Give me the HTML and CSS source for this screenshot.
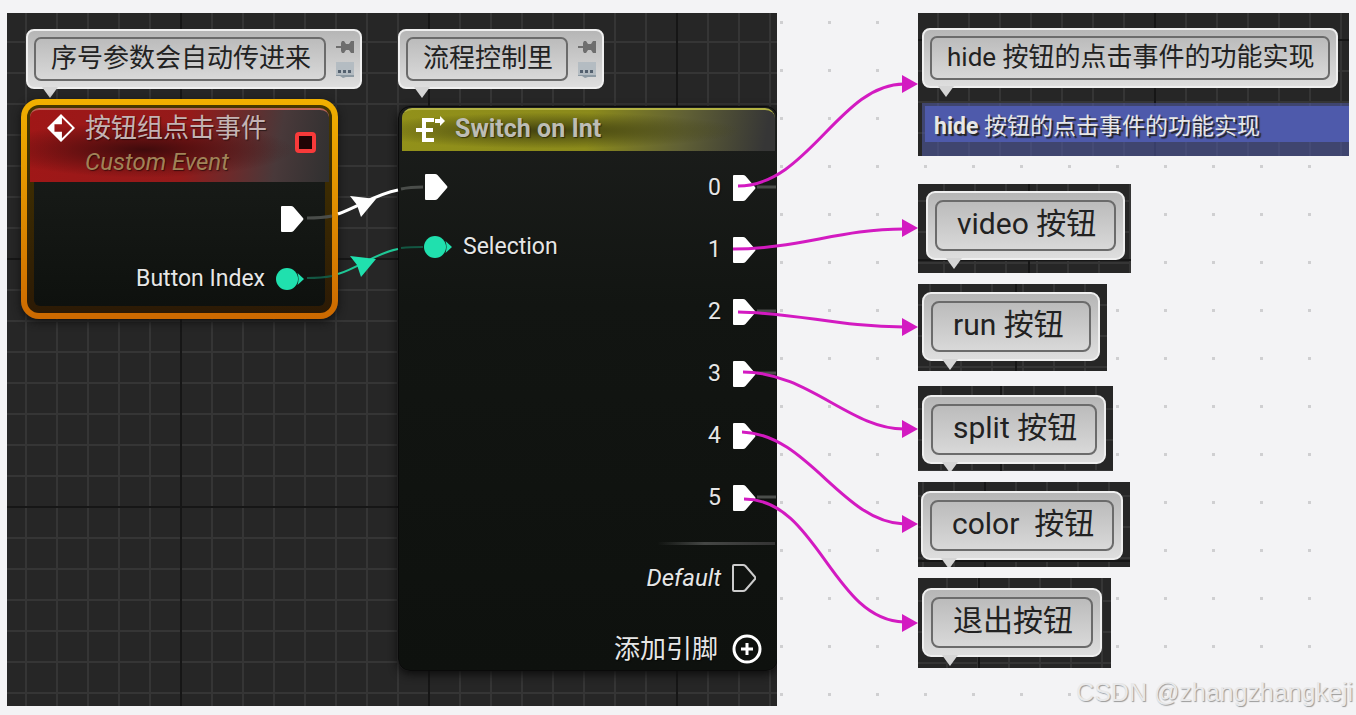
FILE: index.html
```
<!DOCTYPE html>
<html lang="zh-CN">
<head>
    <meta charset="UTF-8">
    <meta name="viewport" content="width=device-width, initial-scale=1.0">
    <title>按钮组点击事件</title>
    <link rel="stylesheet" href="styles.css">
</head>
<body>
    <!-- shared icons -->
    <svg class="symbols" aria-hidden="true">
        <symbol id="exec" viewBox="0 0 24 28">
            <path d="M1 2Q1 1 2 1H11Q12.500 1 13.500 2L23 13Q24 14 23 15L13.500 26Q12.500 27 11 27H2Q1 27 1 26Z"/>
        </symbol>
        <symbol id="data" viewBox="0 0 28 22">
            <circle cx="11" cy="11" r="11"/>
            <path d="M21.500 5L28 11L21.500 17Q23.500 11 21.500 5Z"/>
        </symbol>
        <symbol id="pushpin" viewBox="0 0 18 14">
            <path d="M0 6H5V3L6 1H8L10 4H13L15 1H18V13H15L13 10H10L8 13H6L5 11V8H0Z"/>
        </symbol>
        <symbol id="bubble" viewBox="0 0 18 16">
            <path d="M0 0H18V14H0Z" fill="#b4bcc2"/>
            <path d="M0 13H18V15H10L7 16L4 14H0Z" fill="#8d9aa3"/>
            <path d="M2 8H5V11H2ZM7 8H10V11H7ZM12 8H15V11H12Z" fill="#53606e"/>
        </symbol>
    </svg>

    <main class="canvas">
        <section class="board blueprint">
            <div class="note note-event">
                <span class="note-text">序号参数会自动传进来</span>
                <span class="note-tools">
                    <button type="button" aria-label="固定"><svg class="tool-pin"><use href="#pushpin"/></svg></button>
                    <button type="button" aria-label="气泡"><svg class="tool-bubble"><use href="#bubble"/></svg></button>
                </span>
            </div>

            <div class="note note-switch">
                <span class="note-text">流程控制里</span>
                <span class="note-tools">
                    <button type="button" aria-label="固定"><svg class="tool-pin"><use href="#pushpin"/></svg></button>
                    <button type="button" aria-label="气泡"><svg class="tool-bubble"><use href="#bubble"/></svg></button>
                </span>
            </div>

            <article class="node event-node">
                <header class="event-head">
                    <svg class="event-icon" viewBox="0 0 30 30">
                        <path d="M15 0L30 15L15 30L0 15ZM16 4V11H8V19H16V26L27 15Z" fill="#fff" fill-rule="evenodd"/>
                    </svg>
                    <div>
                        <h2>按钮组点击事件</h2>
                        <p>Custom Event</p>
                    </div>
                    <span class="delegate"></span>
                </header>
                <ul class="pins event-pins">
                    <li><svg class="exec"><use href="#exec"/></svg></li>
                    <li>Button Index <svg class="data"><use href="#data"/></svg></li>
                </ul>
            </article>

            <article class="node switch-node">
                <header class="switch-head">
                    <svg class="switch-icon" viewBox="0 0 30 26">
                        <path d="M18 4H8V24H18M0 14H17" fill="none" stroke="#fff" stroke-width="4"/>
                        <path d="M19 5H25" stroke="#fff" stroke-width="4"/>
                        <path d="M24 0L29 5L24 10Z" fill="#fff"/>
                    </svg>
                    <h2>Switch on Int</h2>
                </header>
                <div class="switch-body">
                    <ul class="pins inputs">
                        <li><svg class="exec"><use href="#exec"/></svg></li>
                        <li><svg class="data"><use href="#data"/></svg> Selection</li>
                    </ul>
                    <ul class="pins outputs">
                        <li>0 <svg class="exec"><use href="#exec"/></svg></li>
                        <li>1 <svg class="exec"><use href="#exec"/></svg></li>
                        <li>2 <svg class="exec"><use href="#exec"/></svg></li>
                        <li>3 <svg class="exec"><use href="#exec"/></svg></li>
                        <li>4 <svg class="exec"><use href="#exec"/></svg></li>
                        <li>5 <svg class="exec"><use href="#exec"/></svg></li>
                    </ul>
                </div>
                <ul class="pins default-pin">
                    <li>Default <svg class="exec hollow"><use href="#exec"/></svg></li>
                </ul>
                <button type="button" class="add-pin">添加引脚
                    <svg viewBox="0 0 30 30"><path d="M15 9V21M9 15H21"/><circle cx="15" cy="15" r="13"/></svg>
                </button>
            </article>
        </section>

        <section class="board board-hide">
            <div class="note"><span class="note-text">hide 按钮的点击事件的功能实现</span></div>
            <div class="comment-box">
                <h2><b>hide</b> 按钮的点击事件的功能实现</h2>
            </div>
        </section>
        <section class="board board-video">
            <div class="note note-large"><span class="note-text">video 按钮</span></div>
        </section>
        <section class="board board-run">
            <div class="note note-large"><span class="note-text">run 按钮&nbsp;</span></div>
        </section>
        <section class="board board-split">
            <div class="note note-large"><span class="note-text">split 按钮</span></div>
        </section>
        <section class="board board-color">
            <div class="note note-large"><span class="note-text">color&nbsp; 按钮</span></div>
        </section>
        <section class="board board-exit">
            <div class="note note-large"><span class="note-text">退出按钮</span></div>
        </section>

        <svg class="wires">
            <!-- wires between the two nodes -->
            <g fill="none" stroke="#4a4d4a" stroke-width="3">
                <path d="M307 218Q322 218 332 216M401 189Q410 187 423 187"/>
                <path d="M757 187H776M757 311H776M757 373H776M757 497H776"/>
            </g>
            <path d="M307 278Q322 278 332 276M401 248Q410 247 423 247" fill="none" stroke="#135743" stroke-width="2"/>
            <path d="M338 214C360 206 376 194 398 190" fill="none" stroke="#fff" stroke-width="3"/>
            <path d="M350 196L376 199L361 217L357 205Z" fill="#fff"/>
            <path d="M338 274C360 267 376 253 398 249" fill="none" stroke="#1fc796" stroke-width="2"/>
            <path d="M350 256L376 259L361 277L357 265Z" fill="#20e0ae"/>

            <!-- links from the switch to each comment -->
            <g fill="none" stroke="#d31ac1" stroke-width="3">
                <path d="M738 186C808 186 840 84 904 84"/>
                <path d="M733 249C798 249 840 229 904 229"/>
                <path d="M738 312C798 313 840 327 904 327"/>
                <path d="M743 372C808 372 850 429 904 429"/>
                <path d="M742 432C808 434 842 522 904 524"/>
                <path d="M744 499C818 499 832 620 904 622"/>
            </g>
            <g fill="#d31ac1">
                <path d="M902 75L918 84L902 93Z"/>
                <path d="M902 219L918 228L902 237Z"/>
                <path d="M902 318L918 327L902 336Z"/>
                <path d="M902 420L918 429L902 438Z"/>
                <path d="M902 515L918 524L902 533Z"/>
                <path d="M902 614L918 623L902 632Z"/>
            </g>
        </svg>

        <p class="watermark">CSDN @zhangzhangkeji</p>
    </main>
</body>
</html>
```

FILE: styles.css
```
* {
    box-sizing: border-box;
}

body {
    margin: 0;
    font-family: Roboto, "Noto Sans CJK SC", sans-serif;
    font-size: 23px;
    color: #e6e6e6;
}

h2, p, ul {
    margin: 0;
    padding: 0;
    font-weight: normal;
}

button {
    border: 0;
    padding: 0;
    background: none;
    color: inherit;
    font: inherit;
    cursor: pointer;
}

svg {
    flex: none;
}

.symbols {
    position: absolute;
    width: 0;
    height: 0;
}

.canvas {
    position: relative;
    min-height: 100vh;
    overflow: hidden;
    background-color: #f3f3f5;
    background-image: conic-gradient(from 90deg at 45px 45px, #cfcfd1 25%, transparent 0);
    background-size: 48px 48px;
    background-position: 15px -24px;
}

/* dark graph paper */
.board {
    --gx: 18px;
    --gy: 28px;
    --mx: 173px;
    --my: -3px;
    position: absolute;
    overflow: hidden;
    background-color: #262626;
    background-image:
        linear-gradient(90deg, #161616 2px, transparent 2px),
        linear-gradient(#161616 2px, transparent 2px),
        linear-gradient(90deg, #353535 2px, transparent 2px),
        linear-gradient(#353535 2px, transparent 2px);
    background-size: 248px 248px, 248px 248px, 31px 31px, 31px 31px;
    background-position: var(--mx) 0, 0 var(--my), var(--gx) 0, 0 var(--gy);
}

.blueprint {
    left: 7px;
    top: 13px;
    width: 770px;
    height: 693px;
}

/* comment bubbles */
.note {
    position: relative;
    display: flex;
    align-items: center;
    width: max-content;
    height: 60px;
    padding: 6px;
    border: 2px solid #efefef;
    border-radius: 8px;
    background: linear-gradient(#b6b6b6, #dedede);
    color: #222;
}

.note::after {
    content: "";
    position: absolute;
    left: 14px;
    top: 100%;
    border: 8px solid transparent;
    border-top: 11px solid #d5d5d5;
    border-bottom: 0;
}

.note-text {
    padding: 0 13px 2px 15px;
    border: 2px solid #6b6b6b;
    border-radius: 7px;
    font-size: 26px;
    line-height: 38px;
}

.note-tools {
    display: flex;
    flex-direction: column;
    gap: 8px;
    margin-left: 10px;
}

.note-tools button {
    display: flex;
}

.tool-pin {
    width: 18px;
    height: 14px;
    fill: #6e6e6e;
}

.tool-bubble {
    width: 18px;
    height: 16px;
}

.note-large {
    height: 69px;
    padding: 7px;
    border-radius: 9px;
}

.note-large::after {
    left: 18px;
}

.note-large .note-text {
    padding: 0 18px 4px 20px;
    border-radius: 8px;
    font-size: 30px;
    line-height: 43px;
}

.note-event,
.note-switch {
    position: absolute;
    left: 19px;
    top: 16px;
}

.note-switch {
    left: 391px;
}

/* nodes */
.node {
    position: absolute;
    text-shadow: 1px 1px 1px rgba(0, 0, 0, 0.5);
}

.event-node {
    left: 14px;
    top: 86px;
    width: 317px;
    padding: 3px;
    border: 6px solid transparent;
    border-radius: 18px;
    background:
        linear-gradient(#463700, #2c1a05) padding-box,
        linear-gradient(#f1b000, #cc6900) border-box;
    box-shadow: 0 3px 8px #111;
}

.event-head {
    display: flex;
    align-items: flex-start;
    height: 74px;
    padding: 4px 13px 0 17px;
    border-radius: 9px 9px 0 0;
    border-top: 2px solid #bb6459;
    background:
        radial-gradient(ellipse 150px 28px at 38% 55%, #400b0c, transparent),
        linear-gradient(100deg, #a01717 0%, #941a1a 52%, #49393a 82%, #303030 100%);
}

.event-head h2 {
    font-size: 26px;
    line-height: 28px;
    color: #c4b4b4;
}

.event-head p {
    margin-top: 2px;
    font-size: 24px;
    font-style: italic;
    line-height: 36px;
    color: #a08358;
}

.event-icon {
    width: 28px;
    height: 28px;
    margin-right: 10px;
}

.delegate {
    width: 21px;
    height: 21px;
    margin: 18px 0 0 auto;
    border: 4px solid #f83a3a;
    border-radius: 4px;
    background: #200405;
}

.pins {
    list-style: none;
    line-height: 30px;
}

.pins li {
    display: flex;
    align-items: center;
    gap: 11px;
    height: 62px;
}

.exec {
    width: 24px;
    height: 28px;
    fill: #fff;
}

.hollow {
    fill: none;
    stroke: #ccc;
    stroke-width: 2px;
}

.data {
    width: 28px;
    height: 22px;
    fill: #20e0ae;
}

.event-pins {
    height: 124px;
    padding: 7px 21px 0 0;
    margin: 0 4px 4px;
    border-radius: 0 0 6px 6px;
    background: linear-gradient(#171a17, #0e110e);
}

.event-pins li {
    height: 60px;
    justify-content: flex-end;
}

.switch-node {
    left: 391px;
    top: 93px;
    width: 380px;
    padding: 1px 2px 0 3px;
    border: 1px solid #0a0a0a;
    border-radius: 12px;
    background: linear-gradient(#1c1e1c, #121512 35%, #0e110e);
    box-shadow: 0 3px 10px #0c0c0c;
}

.switch-head {
    display: flex;
    align-items: center;
    gap: 9px;
    height: 43px;
    padding: 0 0 4px 14px;
    border-top: 2px solid #b2b243;
    border-radius: 10px 10px 0 0;
    background:
        radial-gradient(ellipse 190px 18px at 40% 50%, #41410f, transparent),
        linear-gradient(100deg, #92911a 0%, #8b8a1b 50%, #606035 75%, #363636 97%);
}

.switch-head h2 {
    font-size: 25px;
    font-weight: bold;
    color: #bdbdb5;
}

.switch-icon {
    width: 30px;
    height: 26px;
}

.switch-body {
    display: flex;
    justify-content: space-between;
    padding: 6px 19px 0 22px;
}

.inputs li {
    height: 60px;
}

.default-pin {
    margin: 13px 0 0 256px;
    border-top: 3px solid;
    border-image: linear-gradient(90deg, transparent, #454745 40%, #333 100%) 1;
}

.default-pin li {
    justify-content: flex-end;
    height: 66px;
    padding-right: 19px;
    font-size: 24px;
    font-style: italic;
}

.add-pin {
    display: flex;
    align-items: center;
    gap: 14px;
    margin: 19px 13px 2px auto;
    font-size: 26px;
    line-height: 38px;
    text-shadow: inherit;
}

.add-pin svg {
    width: 30px;
    height: 30px;
    fill: none;
    stroke: #fff;
    stroke-width: 3px;
}

/* boards on the right */
.board-hide {
    left: 918px;
    top: 13px;
    width: 431px;
    padding: 15px 0 0 4px;
    --my: 26px;
    --mx: 236px;
    --gx: 19px;
    --gy: 26px;
}

.comment-box {
    height: 53px;
    margin-top: 15px;
    padding: 3px 0 0 3px;
    background: rgba(80, 90, 160, 0.6);
}

.comment-box h2 {
    height: 36px;
    padding: 3px 0 0 9px;
    font-size: 23px;
    line-height: 36px;
    background: #4e5aab;
    text-shadow: 2px 2px 1px #222;
}

.board-video {
    left: 918px;
    top: 184px;
    width: 213px;
    height: 89px;
    padding: 7px 8px;
    --mx: 110px;
    --my: 75px;
    --gx: 25px;
    --gy: 16px;
}

.board-run {
    left: 918px;
    top: 284px;
    width: 189px;
    height: 87px;
    padding: 8px 4px;
    --mx: 97px;
    --my: -20px;
    --gx: 11px;
    --gy: 20px;
}

.board-split {
    left: 918px;
    top: 386px;
    width: 195px;
    height: 85px;
    padding: 9px 4px;
    --mx: 82px;
    --my: -20px;
    --gx: 22px;
    --gy: 22px;
}

.board-color {
    left: 918px;
    top: 482px;
    width: 212px;
    height: 85px;
    padding: 9px 3px;
    --mx: 66px;
    --my: 78px;
    --gx: 4px;
    --gy: 13px;
}

.board-exit {
    left: 918px;
    top: 578px;
    width: 193px;
    height: 90px;
    padding: 10px 4px;
    --mx: 60px;
    --my: -20px;
    --gx: 28px;
    --gy: 22px;
}

.wires {
    position: absolute;
    left: 0;
    top: 0;
    width: 100%;
    height: 100%;
    pointer-events: none;
}

.watermark {
    position: absolute;
    right: 3px;
    bottom: 8px;
    font-family: "Liberation Sans", sans-serif;
    font-size: 25px;
    line-height: 30px;
    color: #e9e9ea;
    text-shadow: 1px 1px 1px #999;
}
```
